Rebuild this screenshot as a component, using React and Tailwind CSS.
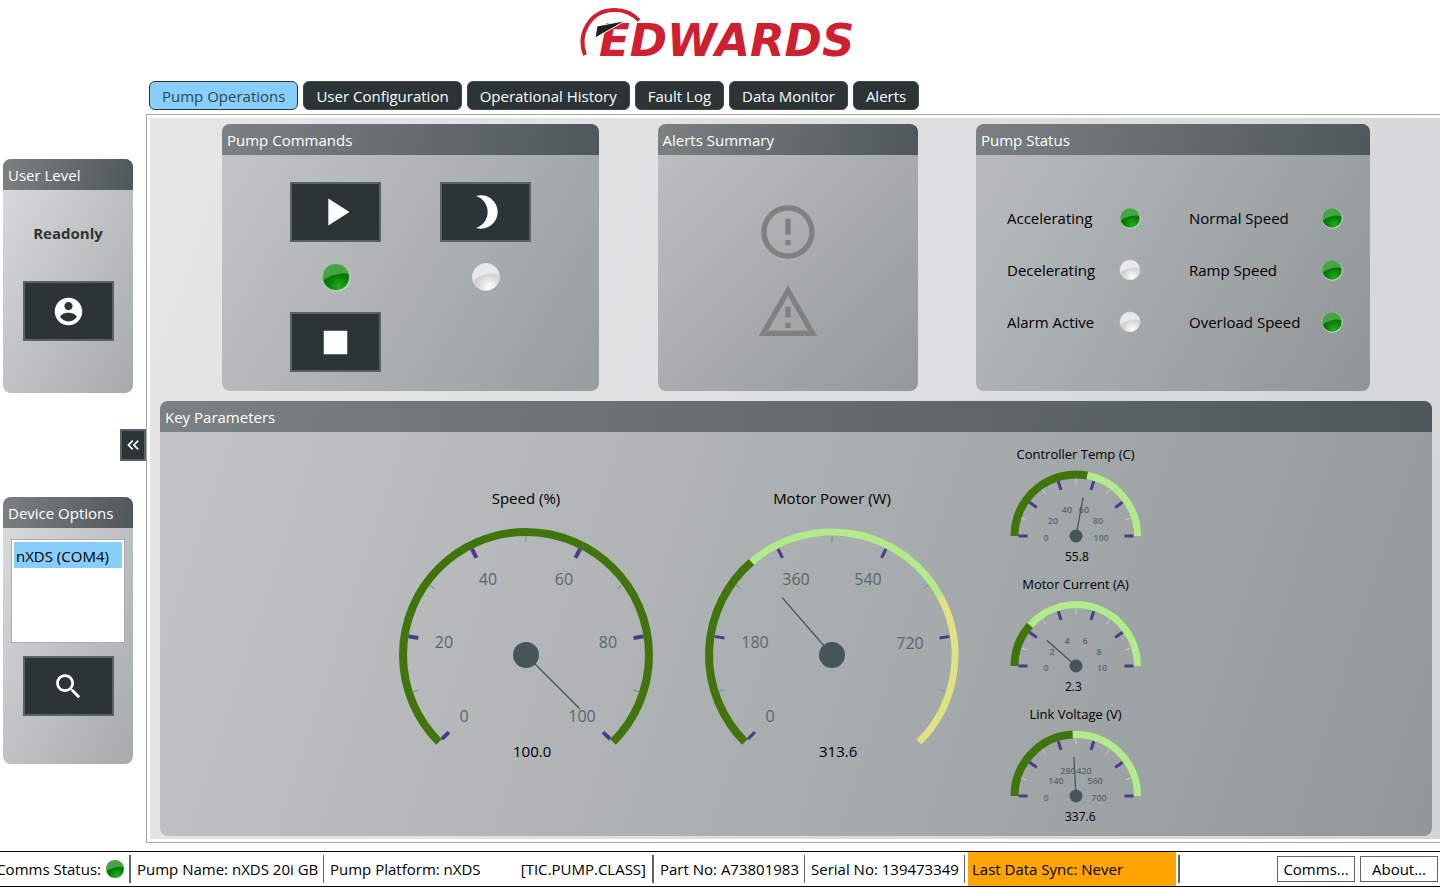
import { useId, useState } from 'react'
import clsx from 'clsx'

const TABS = [
  'Pump Operations',
  'User Configuration',
  'Operational History',
  'Fault Log',
  'Data Monitor',
  'Alerts',
]

const STATUS = [
  { label: 'Accelerating', on: true },
  { label: 'Normal Speed', on: true },
  { label: 'Decelerating', on: false },
  { label: 'Ramp Speed', on: true },
  { label: 'Alarm Active', on: false },
  { label: 'Overload Speed', on: true },
]

const ICONS = {
  play: 'M8 5v14l11-7z',
  stop: 'M6 6h12v12H6z',
  moon: 'M9 2c-1.05 0-2.05.16-3 .46 4.06 1.27 7 5.06 7 9.54 0 4.48-2.94 8.27-7 9.54.95.3 1.95.46 3 .46 5.52 0 10-4.48 10-10S14.52 2 9 2z',
  user: 'M12 2C6.48 2 2 6.48 2 12s4.48 10 10 10 10-4.48 10-10S17.52 2 12 2zm0 3c1.66 0 3 1.34 3 3s-1.34 3-3 3-3-1.34-3-3 1.34-3 3-3zm0 14.2c-2.5 0-4.71-1.28-6-3.22.03-1.99 4-3.08 6-3.08 1.99 0 5.97 1.09 6 3.08-1.29 1.94-3.5 3.22-6 3.22z',
  search:
    'M15.5 14h-.79l-.28-.27C15.41 12.59 16 11.11 16 9.5 16 5.91 13.09 3 9.5 3S3 5.91 3 9.5 5.91 16 9.5 16c1.61 0 3.09-.59 4.23-1.57l.27.28v.79l5 4.99L20.49 19l-4.99-5zm-6 0C7.01 14 5 11.99 5 9.5S7.01 5 9.5 5 14 7.01 14 9.5 11.99 14 9.5 14z',
  collapse:
    'M17.59 18 19 16.59 14.42 12 19 7.41 17.59 6l-6 6zM11 18l1.41-1.41L7.83 12l4.58-4.59L11 6l-6 6z',
  error:
    'M11 15h2v2h-2zm0-8h2v6h-2zm.99-5C6.47 2 2 6.48 2 12s4.47 10 9.99 10C17.52 22 22 17.52 22 12S17.52 2 11.99 2zM12 20c-4.42 0-8-3.58-8-8s3.58-8 8-8 8 3.58 8 8-3.58 8-8 8z',
  warning:
    'M12 5.99 19.53 19H4.47L12 5.99M12 2 1 21h22L12 2zm1 14h-2v2h2v-2zm0-6h-2v4h2v-4z',
}

// Label positions are offsets from the centre of the dial
const BIG_DIAL = {
  width: 256,
  height: 234,
  cx: 128,
  cy: 128,
  radius: 123,
  band: 8,
  sweep: 135,
  tick: 10,
  minor: '#7d8687',
  needle: 76,
  hub: 13,
  labelClass: 'text-[16px]',
  valueClass: 'text-[15px]',
  valueX: -13,
  valueY: 102,
}

const SMALL_DIAL = {
  width: 132,
  height: 95,
  cx: 66,
  cy: 66,
  radius: 61.5,
  band: 8,
  sweep: 90,
  tick: 9,
  minor: '#c9cecf',
  needle: 39,
  hub: 6.5,
  labelClass: 'text-[9px] font-semibold',
  valueClass: 'text-[12px]',
  valueX: -11,
  valueY: 25,
}

const SPEED = {
  title: 'Speed (%)',
  value: 100,
  max: 100,
  tickWidth: 4,
  labels: [
    ['0', -62, 61],
    ['20', -82, -13],
    ['40', -38, -76],
    ['60', 38, -76],
    ['80', 82, -13],
    ['100', 56, 61],
  ],
}

const MOTOR_POWER = {
  title: 'Motor Power (W)',
  value: 313.6,
  max: 900,
  warnFrom: 655,
  hideLastTick: true,
  labels: [
    ['0', -62, 61],
    ['180', -77, -13],
    ['360', -36, -76],
    ['540', 36, -76],
    ['720', 78, -12],
  ],
}

const SMALL_GAUGES = [
  {
    title: 'Controller Temp (C)',
    value: 55.8,
    max: 100,
    labels: [
      ['0', -30, 1],
      ['20', -23, -16],
      ['40', -9, -27],
      ['60', 8, -27],
      ['80', 22, -16],
      ['100', 25, 1],
    ],
  },
  {
    title: 'Motor Current (A)',
    value: 2.3,
    max: 10,
    labels: [
      ['0', -30, 1],
      ['2', -24, -15],
      ['4', -9, -26],
      ['6', 9, -26],
      ['8', 23, -15],
      ['10', 26, 1],
    ],
  },
  {
    title: 'Link Voltage (V)',
    value: 337.6,
    max: 700,
    labels: [
      ['0', -30, 1],
      ['140', -20, -16],
      ['280', -8, -26],
      ['420', 8, -26],
      ['560', 19, -16],
      ['700', 23, 1],
    ],
  },
]

// Angles are in degrees, 0 pointing straight up
function polar(radius, angle) {
  const rad = (angle * Math.PI) / 180
  return [radius * Math.sin(rad), -radius * Math.cos(rad)]
}

function arc(radius, from, to) {
  const [x1, y1] = polar(radius, from)
  const [x2, y2] = polar(radius, to)
  const large = to - from > 180 ? 1 : 0
  return `M${x1} ${y1}A${radius} ${radius} 0 ${large} 1 ${x2} ${y2}`
}

function Icon({ name, size }) {
  return (
    <svg width={size} height={size} viewBox="0 0 24 24" fill="currentColor" aria-hidden="true">
      <path d={ICONS[name]} />
    </svg>
  )
}

function Led({ on, size = 22 }) {
  const id = useId()

  return (
    <svg
      width={size}
      height={size}
      viewBox="0 0 30 30"
      role="img"
      aria-label={on ? 'On' : 'Off'}
      className="shrink-0"
    >
      <defs>
        <radialGradient id={id} cx="0.62" cy="0.85" r="0.7">
          <stop offset="0" stopColor={on ? '#1fae1c' : '#ffffff'} />
          <stop offset="0.6" stopColor={on ? '#077a0a' : '#d6d6d8'} />
          <stop offset="1" stopColor={on ? '#056d08' : '#cbcbcd'} />
        </radialGradient>
      </defs>
      <circle cx="15.5" cy="15.6" r="14" fill={on ? '#dcebdc' : '#8f9496'} opacity={on ? 0.8 : 0.5} />
      <circle cx="15" cy="15" r="13.6" fill={`url(#${id})`} />
      <path
        d="M1.8 18.5A13.6 13.6 0 1 1 28.4 12.5C23 10.5 12 11.5 1.8 18.5Z"
        fill={on ? '#48a346' : '#e9e9eb'}
      />
      <circle
        cx="15"
        cy="15"
        r="13.6"
        fill="none"
        stroke={on ? '#a9d3a8' : '#e8e8ea'}
        strokeWidth="0.8"
      />
    </svg>
  )
}

function Panel({ title, className, children }) {
  return (
    <section className={clsx('flex flex-col overflow-hidden rounded-lg', className)}>
      <h2 className="h-[31px] shrink-0 bg-linear-[100deg] from-[#7b8182] to-[#50575b] px-[5px] text-[15px] leading-8 text-white">
        {title}
      </h2>
      {children}
    </section>
  )
}

function CommandButton({ icon, size, label }) {
  return (
    <button
      type="button"
      aria-label={label}
      className="flex h-[60px] w-[91px] items-center justify-center border-2 border-[#5b6264] bg-[#2d3436] text-white"
    >
      <Icon name={icon} size={size} />
    </button>
  )
}

function Dial({ gauge, dial }) {
  const { value, max, warnFrom = max, tickWidth = 3, labels } = gauge
  const toAngle = (v) => (v / max) * dial.sweep * 2 - dial.sweep
  const inner = dial.radius - dial.band / 2
  const [needleX, needleY] = polar(dial.needle, toAngle(value))
  const lastTick = gauge.hideLastTick ? 9 : 10

  const ticks = []
  for (let i = 0; i <= lastTick; i++) {
    const angle = toAngle((max * i) / 10)
    const major = i % 2 === 0
    const [x1, y1] = polar(inner, angle)
    const [x2, y2] = polar(inner - (major ? dial.tick : 6), angle)
    ticks.push({ i, major, x1, y1, x2, y2 })
  }

  return (
    <svg
      width={dial.width}
      height={dial.height}
      role="img"
      aria-label={`${gauge.title} ${value.toFixed(1)}`}
    >
      <g transform={`translate(${dial.cx} ${dial.cy})`} fill="none">
        {value < warnFrom && (
          <path
            d={arc(dial.radius, toAngle(value), toAngle(warnFrom))}
            stroke="#b2ec8a"
            strokeWidth={dial.band - 1}
          />
        )}
        {warnFrom < max && (
          <path
            d={arc(dial.radius, toAngle(warnFrom), dial.sweep)}
            stroke="#e1e283"
            strokeWidth={dial.band - 1}
          />
        )}
        <path
          d={arc(dial.radius, -dial.sweep, toAngle(value))}
          stroke="#41740b"
          strokeWidth={dial.band}
        />
        {ticks.map((t) => (
          <line
            key={t.i}
            x1={t.x1}
            y1={t.y1}
            x2={t.x2}
            y2={t.y2}
            stroke={t.major ? '#483d8b' : dial.minor}
            strokeWidth={t.major ? tickWidth : 1}
          />
        ))}
        {labels.map(([text, x, y]) => (
          <text
            key={text}
            x={x}
            y={y}
            textAnchor="middle"
            dominantBaseline="central"
            fill="#5a6669"
            className={dial.labelClass}
          >
            {text}
          </text>
        ))}
        <line x1="0" y1="0" x2={needleX} y2={needleY} stroke="#46555a" strokeWidth="1.3" />
        <circle r={dial.hub} fill="#46555a" />
        <text x={dial.valueX} y={dial.valueY} fill="#000" className={dial.valueClass}>
          {value.toFixed(1)}
        </text>
      </g>
    </svg>
  )
}

function BigGauge({ gauge }) {
  return (
    <figure className="flex w-[306px] flex-col items-center gap-[19px] pb-5">
      <figcaption className="text-[15px] leading-5">{gauge.title}</figcaption>
      <Dial gauge={gauge} dial={BIG_DIAL} />
    </figure>
  )
}

function Logo() {
  return (
    <svg width="288" height="72" viewBox="574 0 288 72" role="img" aria-label="Edwards">
      <path
        d="M583 55C575 34 588 11 611 10C622 9.5 631 14 637 20.5"
        fill="none"
        stroke="#cf202f"
        strokeWidth="4"
      />
      <text
        x="597"
        y="56"
        fill="#cf202f"
        className="font-['DejaVu_Sans',sans-serif] text-[45px] font-bold italic"
      >
        EDWARDS
      </text>
      <path d="M595 26L624 20.5L593 38Z" fill="#1f1f21" stroke="#fff" strokeWidth="1" />
    </svg>
  )
}

function StatusBar() {
  return (
    <footer className="mt-2 flex h-9 shrink-0 items-stretch overflow-hidden border-y border-black bg-white whitespace-nowrap">
      <div className="my-[3px] flex w-[131px] shrink-0 items-center justify-end gap-1 border-r-2 border-[#5f6466] pr-1">
        Comms Status:
        <Led on size={20} />
      </div>
      <div className="my-[3px] flex w-[193px] shrink-0 items-center border-r border-[#5f6466] pt-px pl-1.5">
        Pump Name: nXDS 20i GB
      </div>
      <div className="my-[3px] flex w-[330px] shrink-0 items-center justify-between border-r-2 border-[#5f6466] px-1.5 pt-px">
        <span>Pump Platform: nXDS</span>
        <span>[TIC.PUMP.CLASS]</span>
      </div>
      <div className="my-[3px] flex w-[151px] shrink-0 items-center border-r border-[#5f6466] pt-px pl-1.5">
        Part No: A73801983
      </div>
      <div className="my-[3px] flex w-[160px] shrink-0 items-center border-r border-[#5f6466] pt-px pl-1.5">
        Serial No: 139473349
      </div>
      <div className="ml-[3px] flex w-[208px] shrink-0 items-center bg-[#ffa500] pt-px pl-1">
        Last Data Sync: Never
      </div>
      <div className="my-[3px] ml-0.5 flex flex-1 items-center justify-end gap-[5px] border-l-2 border-[#5f6466] pr-0.5">
        <button type="button" className="h-[26px] w-[78px] border border-[#5f6466] bg-white leading-6">
          Comms...
        </button>
        <button type="button" className="h-[26px] w-[78px] border border-[#5f6466] bg-white leading-6">
          About...
        </button>
      </div>
    </footer>
  )
}

function App() {
  const [activeTab, setActiveTab] = useState('Pump Operations')

  return (
    <div className="flex min-h-screen flex-col bg-white font-['Open_Sans','Noto_Sans',sans-serif] text-[15px] text-black">
      <header className="flex h-[81px] shrink-0 justify-center">
        <Logo />
      </header>

      <div className="flex flex-1">
        <aside className="flex w-[146px] shrink-0 flex-col gap-9 pt-[78px] pl-[3px]">
          <Panel
            title="User Level"
            className="h-[234px] w-[130px] bg-linear-to-br from-[#dadcdd] to-[#a6aaab]"
          >
            <div className="flex flex-col items-center gap-9 pt-[31px]">
              <p className="font-bold leading-6 text-[#2d3436]">Readonly</p>
              <CommandButton icon="user" size={33} label="Change user level" />
            </div>
          </Panel>

          <button
            type="button"
            aria-label="Collapse sidebar"
            className="flex h-8 w-[26px] items-center justify-center self-end border-2 border-[#5b6264] bg-[#2d3436] text-white"
          >
            <Icon name="collapse" size={20} />
          </button>

          <Panel
            title="Device Options"
            className="h-[267px] w-[130px] bg-linear-to-br from-[#dadcdd] to-[#a6aaab]"
          >
            <div className="flex flex-col items-center gap-[13px] px-2 pt-[11px]">
              <select
                size={4}
                aria-label="Devices"
                defaultValue="nxds"
                className="h-[104px] w-full overflow-hidden border border-[#a9acb0] bg-white p-0.5"
              >
                <option
                  value="nxds"
                  className="bg-[linear-gradient(#87cefa,#87cefa)] px-0.5 pt-1 pb-0.5 text-black"
                >
                  nXDS (COM4)
                </option>
              </select>
              <CommandButton icon="search" size={33} label="Search for devices" />
            </div>
          </Panel>
        </aside>

        <div className="flex min-w-0 flex-1 flex-col">
          <nav className="flex gap-[5px] pb-1 pl-[3px]">
            {TABS.map((tab) => (
              <button
                key={tab}
                type="button"
                onClick={() => setActiveTab(tab)}
                className={clsx(
                  'h-[29px] rounded-md border px-3 leading-7 whitespace-nowrap',
                  tab === activeTab
                    ? 'border-[#2d3436] bg-[#87cefa] text-[#2d4654]'
                    : 'border-[#42494b] bg-[#2d3436] text-white'
                )}
              >
                {tab}
              </button>
            ))}
          </nav>

          <div className="flex flex-1 flex-col border-y border-l border-[#a3a8aa] py-[3px] pl-[3px]">
            <main className="flex flex-1 flex-col gap-2.5 bg-linear-[110deg] from-[#e6e6e6] via-[#dddfe0] to-[#d2d5d6] pt-1.5 pb-[3px]">
              <div className="flex justify-between gap-4 pr-[70px] pl-[72px]">
                <Panel
                  title="Pump Commands"
                  className="h-[267px] w-[377px] bg-linear-[120deg] from-[#c4c6c7] to-[#979d9e]"
                >
                  <div className="grid grid-cols-[150px_150px] justify-center justify-items-center pt-[27px]">
                    <CommandButton icon="play" size={46} label="Start pump" />
                    <CommandButton icon="moon" size={40} label="Standby" />
                    <div className="flex h-[70px] items-center">
                      <Led on size={30} />
                    </div>
                    <div className="flex h-[70px] items-center">
                      <Led on={false} size={30} />
                    </div>
                    <CommandButton icon="stop" size={47} label="Stop pump" />
                  </div>
                </Panel>

                <Panel
                  title="Alerts Summary"
                  className="h-[267px] w-[260px] bg-linear-[135deg] from-[#bec1c2] to-[#94999b]"
                >
                  <div className="flex flex-col items-center gap-4 pt-[45px] text-[#808080]">
                    <Icon name="error" size={64} />
                    <Icon name="warning" size={64} />
                  </div>
                </Panel>

                <Panel
                  title="Pump Status"
                  className="h-[267px] w-[394px] bg-linear-[120deg] from-[#b9bdbe] to-[#8f9598]"
                >
                  <div className="grid auto-rows-[52px] grid-cols-[112px_70px_132px_22px] items-center pt-[37px] pl-[31px]">
                    {STATUS.map((item) => (
                      <div key={item.label} className="contents">
                        <span>{item.label}</span>
                        <Led on={item.on} />
                      </div>
                    ))}
                  </div>
                </Panel>
              </div>

              <Panel
                title="Key Parameters"
                className="mr-2 ml-2.5 flex-1 bg-linear-[108deg] from-[#c2c5c6] to-[#92989a]"
              >
                <div className="flex flex-1 items-center justify-center pr-[53px]">
                  <BigGauge gauge={SPEED} />
                  <BigGauge gauge={MOTOR_POWER} />
                  <div className="flex w-[181px] flex-col gap-[11px] pt-0.5">
                    {SMALL_GAUGES.map((gauge) => (
                      <figure key={gauge.title} className="flex flex-col items-center gap-2">
                        <figcaption className="text-[13px] leading-4">{gauge.title}</figcaption>
                        <Dial gauge={gauge} dial={SMALL_DIAL} />
                      </figure>
                    ))}
                  </div>
                </div>
              </Panel>
            </main>
          </div>
        </div>
      </div>

      <StatusBar />
    </div>
  )
}

export default App
